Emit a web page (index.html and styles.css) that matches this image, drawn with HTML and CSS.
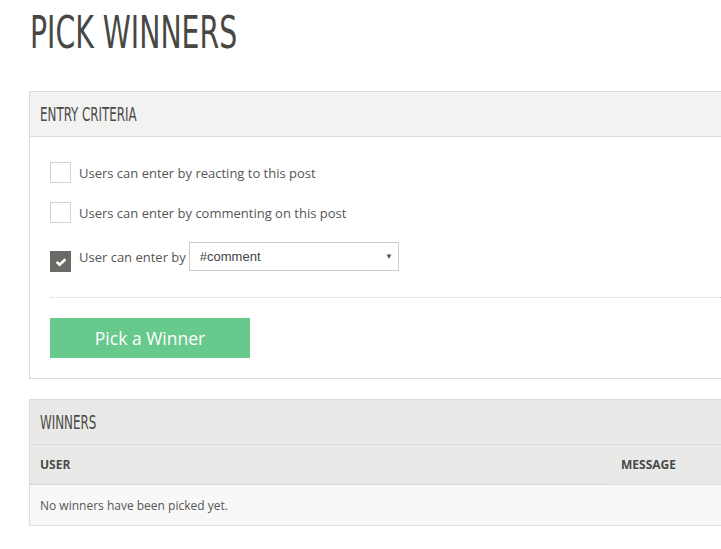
FILE: index.html
```html
<!DOCTYPE html>
<html lang="en">
<head>
    <meta charset="UTF-8">
    <meta name="viewport" content="width=device-width, initial-scale=1.0">
    <title>Pick Winners</title>
    <link rel="stylesheet" href="styles.css">
</head>
<body>
    <h1 class="page-title"><span class="narrow">PICK WINNERS</span></h1>

    <!-- Criterios de entrada -->
    <section class="panel">
        <div class="panel-heading entry">
            <h2><span class="narrow">ENTRY CRITERIA</span></h2>
        </div>
        <div class="panel-body">
            <label class="option">
                <span class="box"></span>
                Users can enter by reacting to this post
            </label>
            <label class="option">
                <span class="box"></span>
                Users can enter by commenting on this post
            </label>
            <div class="option keyword">
                <span class="box checked">
                    <svg width="12" height="10" viewBox="0 0 12 10"><path d="M1.6 4.9 L4.6 7.7 L10.4 2.2" fill="none" stroke="#fff" stroke-width="2.6"/></svg>
                </span>
                <span class="keyword-label">User can enter by</span>
                <div class="select">
                    <span>#comment</span>
                    <span class="arrow">&#9660;</span>
                </div>
            </div>
            <div class="divider"></div>
            <button class="btn-pick">Pick a Winner</button>
        </div>
    </section>

    <!-- Ganhadores -->
    <section class="panel">
        <div class="panel-heading winners">
            <h2><span class="narrow">WINNERS</span></h2>
        </div>
        <div class="table-head">
            <div class="col-user">USER</div>
            <div class="col-message">MESSAGE</div>
        </div>
        <div class="table-empty">No winners have been picked yet.</div>
    </section>
</body>
</html>
```

FILE: styles.css
```css
/* Pagina */
body {
    margin: 0;
    padding: 0 0 0 29px;
    font-family: "Open Sans", Arial, sans-serif;
    color: #555;
    background: #fff;
    overflow-x: hidden;
}
/* Fonte condensada dos titulos */
.narrow {
    display: inline-block;
    font-family: "Liberation Sans Narrow", "DejaVu Sans Condensed", "Liberation Sans", sans-serif;
    transform-origin: left center;
    white-space: nowrap;
}
.page-title {
    font-size: 45px;
    font-weight: normal;
    color: #474743;
    margin: 0 0 28px 1px;
    line-height: 61px;
}
.page-title .narrow {
    transform: scaleX(0.7);
}
/* Paineis */
.panel {
    width: 711px;
    border: 1px solid #dcdcda;
    margin-bottom: 20px;
}
.panel-heading {
    height: 44px;
    border-bottom: 1px solid #dcdcda;
    display: flex;
    align-items: center;
    padding-left: 10px;
}
.panel-heading.entry {
    background: #f2f2f1;
}
.panel-heading.winners {
    background: #e9e9e7;
}
.panel-heading h2 {
    margin: 0;
    font-size: 20px;
    font-weight: normal;
    color: #4a4a46;
    line-height: 1;
}
.panel-heading .narrow {
    transform: scaleX(0.66);
}
.panel-body {
    padding: 25px 20px 20px 20px;
}
/* Opcoes */
.option {
    display: flex;
    align-items: center;
    font-size: 13px;
    color: #555;
    margin-bottom: 19px;
}
.box {
    width: 19px;
    height: 19px;
    border: 1px solid #d6d2cc;
    margin-right: 8px;
    display: flex;
    align-items: center;
    justify-content: center;
    flex-shrink: 0;
}
.box.checked {
    background: #6b6a66;
    border-color: #6b6a66;
}
.option.keyword {
    margin-bottom: 0;
    margin-top: 18px;
}
.option.keyword .box {
    align-self: flex-end;
    margin-bottom: -1px;
}
.keyword-label {
    margin-right: 3px;
}
.select {
    height: 27px;
    border: 1px solid #ccc;
    display: flex;
    align-items: center;
    justify-content: space-between;
    padding: 0 5px 0 10px;
    box-sizing: content-box;
    width: 193px;
    font-family: "Liberation Sans", Arial, sans-serif;
    font-size: 13px;
    color: #444;
}
.select .arrow {
    font-size: 8px;
    color: #555;
}
.divider {
    border-top: 1px dotted #ccc;
    margin-top: 26px;
    margin-bottom: 20px;
}
/* Botao */
.btn-pick {
    width: 200px;
    height: 40px;
    background: #68c98c;
    border: none;
    color: #fff;
    font-family: "Open Sans", Arial, sans-serif;
    font-size: 17.5px;
    cursor: pointer;
    display: block;
}
/* Tabela de ganhadores */
.table-head {
    display: flex;
    background: #e9e9e7;
    height: 40px;
    font-size: 12px;
    font-weight: bold;
    color: #4a4a4a;
}
.col-user {
    width: 570px;
    padding-left: 10px;
    display: flex;
    align-items: center;
    border-bottom: 1px dotted #ccc;
}
.col-message {
    flex: 1;
    padding-left: 11px;
    display: flex;
    align-items: center;
    border-bottom: 1px solid #dcdcda;
}
.table-empty {
    height: 40px;
    background: #f8f8f8;
    font-size: 12px;
    color: #555;
    padding-left: 10px;
    display: flex;
    align-items: center;
}
```
